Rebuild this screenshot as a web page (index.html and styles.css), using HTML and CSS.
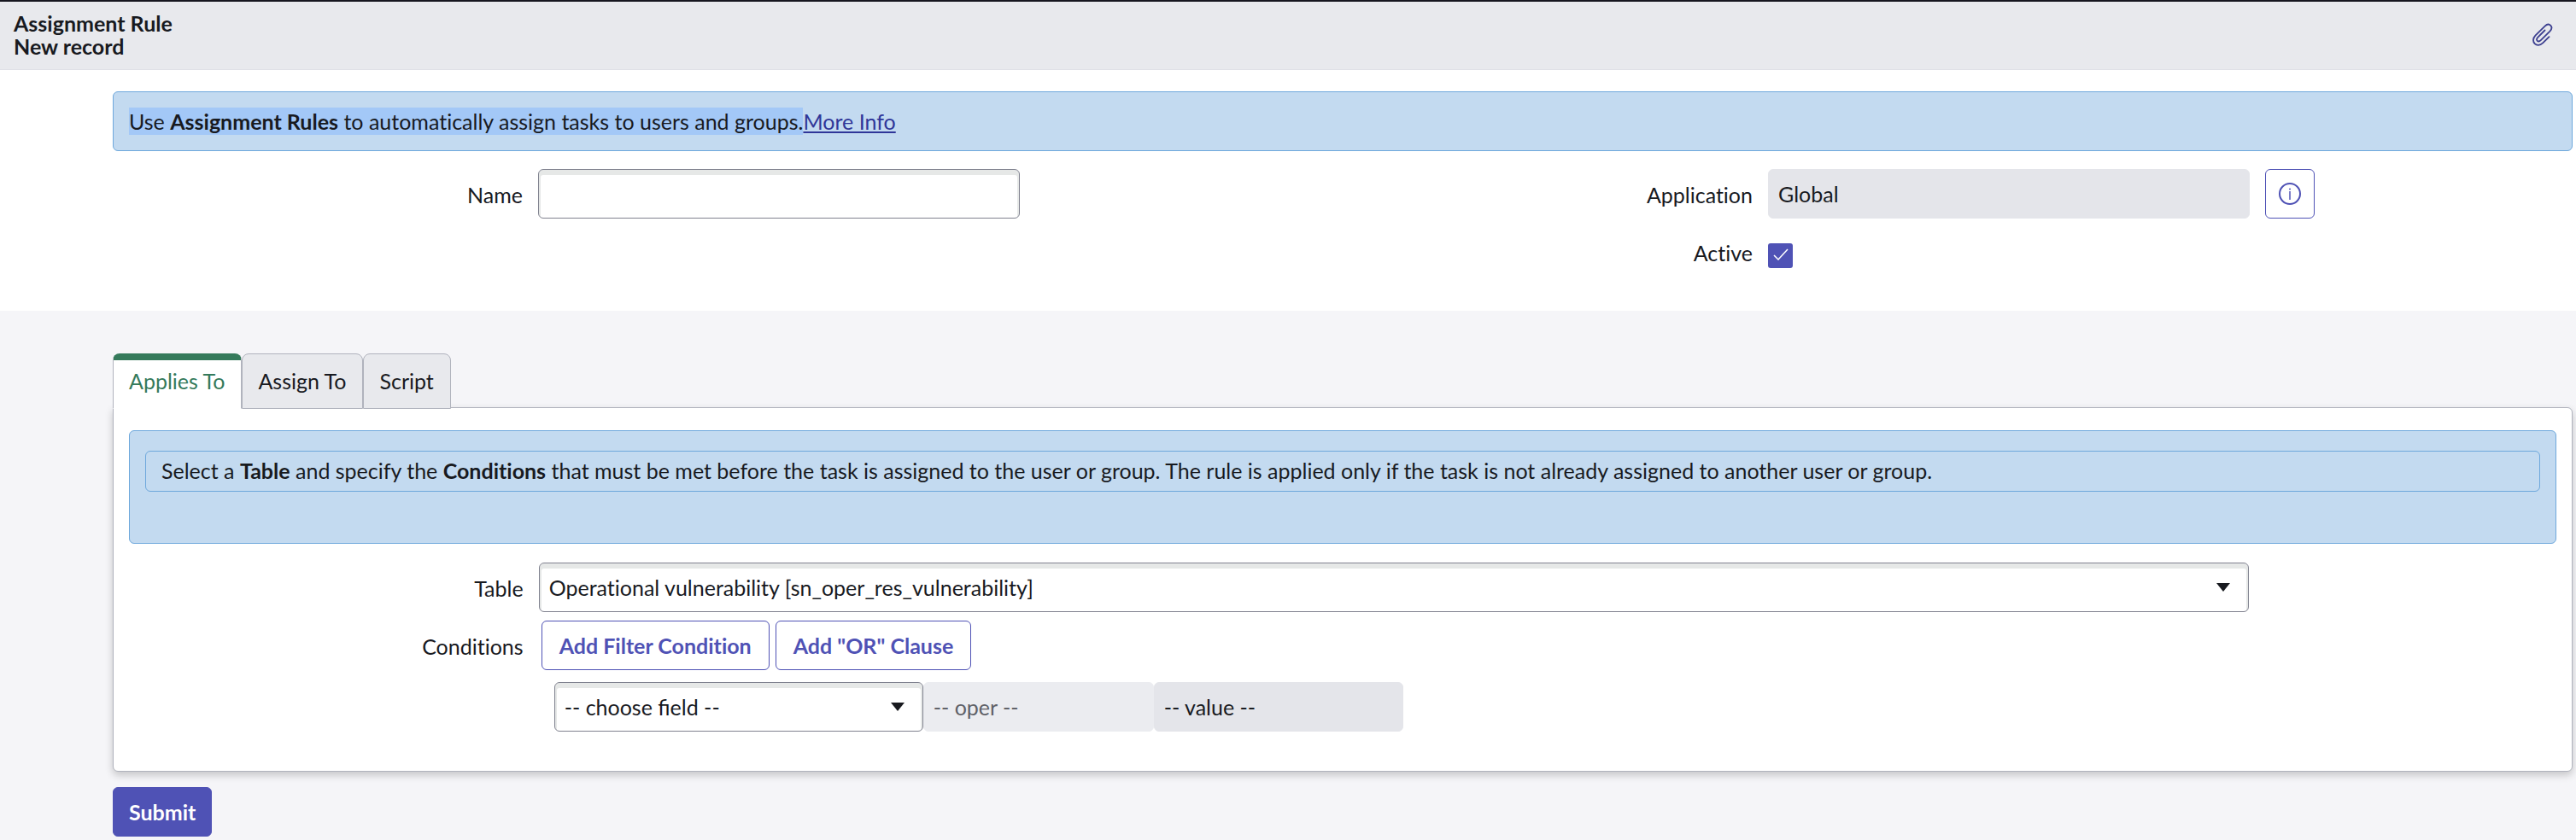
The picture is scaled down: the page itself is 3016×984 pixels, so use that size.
FILE: index.html
```html
<!DOCTYPE html>
<html lang="en">
  <head>
    <meta charset="UTF-8" />
    <meta name="viewport" content="width=device-width, initial-scale=1.0" />
    <title>Assignment Rule | New record</title>
    <link rel="stylesheet" href="styles.css" />
  </head>

  <body>
    <header class="header">
      <h1 class="title">Assignment Rule<br />New record</h1>
      <button type="button" class="attach" aria-label="Manage attachments">
        <svg width="26" height="28" viewBox="0 0 26 28" fill="none">
          <path
            d="M15.5 8.5 L7.4 16.6 C4.2 20 7.6 23.2 10.8 20.1 L21.4 9.6 C26.4 4.2 20.6 -1.2 15.6 3.6 L4.6 14.4 C-2.4 21.6 6.2 30.2 13.4 23.2 L20.5 16.2"
            stroke="#3c3f8f"
            stroke-width="1.8"
            stroke-linecap="round"
          />
        </svg>
      </button>
    </header>

    <form>
      <section class="main">
        <div class="alert">
          <mark>Use <b>Assignment Rules</b> to automatically assign tasks to users and groups.</mark><a href="#">More Info</a>
        </div>
        <div class="columns">
          <div class="column">
            <div class="row">
              <label for="name">Name</label>
              <input type="text" class="control" id="name" />
            </div>
          </div>
          <div class="column">
            <div class="row">
              <label for="application">Application</label>
              <input type="text" class="control readonly" id="application" value="Global" readonly />
              <button type="button" class="btn icon-btn" aria-label="Preview application">
                <svg width="28" height="28" viewBox="0 0 28 28" fill="none">
                  <circle cx="14" cy="14" r="12" stroke="#4f52b5" stroke-width="2" />
                  <path d="M14 11V21" stroke="#4f52b5" stroke-width="1.5" />
                  <circle cx="14" cy="8.5" r="1" fill="#4f52b5" />
                </svg>
              </button>
            </div>
            <div class="row check-row">
              <label for="active">Active</label>
              <input type="checkbox" class="checkbox" id="active" checked />
            </div>
          </div>
        </div>
      </section>

      <section class="details">
        <div class="tabs" role="tablist">
          <button type="button" class="tab active" role="tab" aria-selected="true">Applies To</button>
          <button type="button" class="tab" role="tab">Assign To</button>
          <button type="button" class="tab" role="tab">Script</button>
        </div>
        <div class="panel">
          <div class="alert nested">
            <div class="message">
              Select a <b>Table</b> and specify the <b>Conditions</b> that must be met before the task is assigned to the user or group. The rule is applied only if the task is not already assigned to another user or group.
            </div>
          </div>
          <div class="row wide">
            <label for="table">Table</label>
            <select class="control" id="table">
              <option>Operational vulnerability [sn_oper_res_vulnerability]</option>
            </select>
          </div>
          <div class="row wide" role="group" aria-labelledby="conditions">
            <span class="label" id="conditions">Conditions</span>
            <div class="conditions">
              <div class="buttons">
                <button type="button" class="btn">Add Filter Condition</button>
                <button type="button" class="btn">Add "OR" Clause</button>
              </div>
              <div class="filter">
                <select class="control field" aria-label="Field">
                  <option>-- choose field --</option>
                </select>
                <select class="control oper" aria-label="Operator" disabled>
                  <option>-- oper --</option>
                </select>
                <input type="text" class="control readonly value" aria-label="Value" value="-- value --" readonly />
              </div>
            </div>
          </div>
        </div>
        <button type="submit" class="btn submit">Submit</button>
      </section>
    </form>
  </body>
</html>
```

FILE: styles.css
```css
* {
  margin: 0;
  padding: 0;
  box-sizing: border-box;
}

body {
  min-height: 100vh;
  background-color: #f5f5f8;
  color: #181a1f;
  font-family: Lato, "Liberation Sans", sans-serif;
  font-size: 25px;
  line-height: 32px;
  font-variant-ligatures: none;
}

input,
select,
button {
  font: inherit;
  color: inherit;
}

.header {
  display: flex;
  justify-content: space-between;
  align-items: center;
  height: 82px;
  padding: 0 26px 2px 16px;
  background-color: #e8e9ed;
  border-top: 2px solid #16161f;
  border-bottom: 1px solid #dfe0e6;
}

.title {
  font-size: 25px;
  line-height: 27px;
  font-weight: bold;
}

.attach {
  display: flex;
  background-color: transparent;
  border: none;
}

.main {
  padding: 25px 4px 50px 132px;
  background-color: white;
}

.alert {
  padding: 18px;
  background-color: #c3daf0;
  border: 1px solid #6ea8dc;
  border-radius: 6px;
}

.alert mark {
  padding: 1px 0;
  background-color: #a3c8f7;
  color: inherit;
}

.alert a {
  color: #2f3699;
}

.columns {
  display: flex;
  margin-top: 21px;
}

.column {
  flex: 1;
}

.row {
  display: grid;
  grid-template-columns: 4fr 5fr 3fr;
}

.row label,
.label {
  padding-top: 14px;
  text-align: right;
}

.control {
  height: 58px;
  margin: 0 18px;
  padding: 0 11px;
  background-color: white;
  border: 1px solid #80828f;
  border-radius: 6px;
  box-shadow: inset 0 4px 0 2px #e6e8e7;
  outline: none;
}

select.control {
  appearance: none;
  background: white url("data:image/svg+xml,%3Csvg xmlns='http://www.w3.org/2000/svg' width='16' height='10'%3E%3Cpath d='M0 0H16L8 10Z' fill='%23181a1f'/%3E%3C/svg%3E") no-repeat right 21px center;
}

.control.readonly {
  background-color: #e4e5ea;
  border-color: #e4e5ea;
  box-shadow: none;
}

.btn {
  height: 58px;
  padding: 0 20px;
  background-color: white;
  border: 1px solid #4f52b5;
  border-radius: 6px;
  color: #4f52b5;
  font-weight: bold;
}

.icon-btn {
  display: flex;
  justify-content: center;
  align-items: center;
  width: 58px;
  padding: 0;
}

.check-row {
  margin-top: 10px;
}

.checkbox {
  appearance: none;
  width: 29px;
  height: 29px;
  margin: 19px 18px 0;
  border-radius: 3px;
  background: #4f52b5 url("data:image/svg+xml,%3Csvg xmlns='http://www.w3.org/2000/svg' width='18' height='14'%3E%3Cpath d='M1 8L6 13L17 1' fill='none' stroke='white' stroke-width='1.5'/%3E%3C/svg%3E") no-repeat center 6px;
}

.details {
  padding: 50px 4px 4px 132px;
}

.tabs {
  display: flex;
}

.tab {
  height: 65px;
  margin-bottom: -2px;
  padding: 0 19px 2px 18px;
  background-color: #e8e9ed;
  border: 1px solid #b0b3bd;
  border-radius: 8px 8px 0 0;
  z-index: 1;
}

.tab.active {
  padding-bottom: 9px;
  background-color: white;
  border-top: 8px solid #357a5b;
  border-bottom-color: white;
  color: #357a5b;
}

.panel {
  padding: 26px 0 36px;
  background-color: white;
  border: 1px solid #b0b3bd;
  border-radius: 0 6px 6px 6px;
  box-shadow: 0 4px 10px rgba(0, 0, 0, 0.2);
}

.nested {
  height: 133px;
  margin: 0 18px 22px;
  padding-top: 23px;
}

.message {
  padding: 6px 18px 8px;
  border: 1px solid #6ea8dc;
  border-radius: 6px;
}

.wide {
  grid-template-columns: 4fr 17fr 3fr;
  margin-bottom: 10px;
}

.conditions {
  margin: 0 18px;
}

.buttons {
  display: flex;
  gap: 7px;
  padding-left: 3px;
}

.filter {
  display: flex;
  padding: 14px 0 0 18px;
}

.filter .control {
  margin: 0;
}

.field {
  width: 432px;
  font-variant-ligatures: normal;
}

.filter .oper {
  width: 270px;
  background: #ebecf0;
  border-color: #ebecf0;
  box-shadow: none;
  color: #5f6167;
  opacity: 1;
}

.value {
  width: 292px;
}

.submit {
  margin-top: 18px;
  padding: 0 18px;
  background-color: #4f52b5;
  color: white;
}
```
